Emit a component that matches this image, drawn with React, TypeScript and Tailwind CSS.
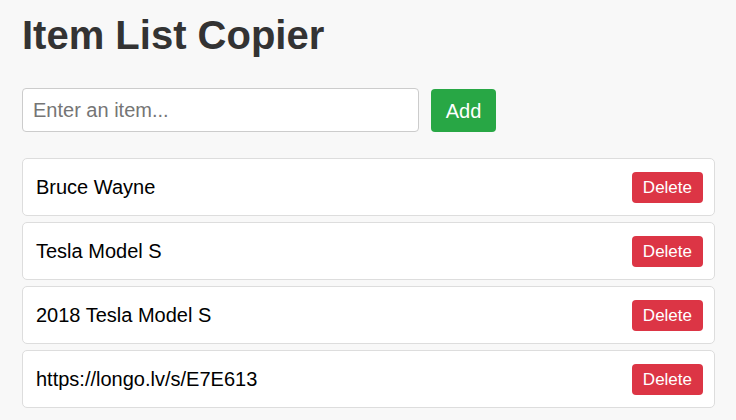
import React, { useState } from 'react';

const initialItems = ['Bruce Wayne', 'Tesla Model S', '2018 Tesla Model S', 'https://longo.lv/s/E7E613'];

export default function App() {
  const [items, setItems] = useState<string[]>(initialItems);
  const [text, setText] = useState('');

  const addItem = () => {
    const value = text.trim();
    if (!value) return;
    setItems([...items, value]);
    setText('');
  };

  const removeItem = (index: number) => {
    setItems(items.filter((_, i) => i !== index));
  };

  return (
    <div className="min-h-screen bg-[#f8f8f8] pl-[22px] pr-[21px] pt-[12px] pb-6 font-['Liberation_Sans',Arial,sans-serif]">
      <h1 className="text-[40px] leading-[46px] font-bold text-[#333]">Item List Copier</h1>

      <div className="mt-[30px] flex items-start gap-[12px]">
        <input
          type="text"
          value={text}
          onChange={(e) => setText(e.target.value)}
          onKeyDown={(e) => e.key === 'Enter' && addItem()}
          placeholder="Enter an item..."
          className="w-[397px] h-[44px] px-[10px] text-[20px] bg-white border border-[#ccc] rounded-[4px] text-black placeholder:text-[#757575] outline-none"
        />
        <button
          onClick={addItem}
          className="mt-px h-[43px] w-[65px] text-[20px] text-white bg-[#28a745] rounded-[4px]"
        >
          Add
        </button>
      </div>

      <ul className="mt-[26px] flex flex-col gap-[6px]">
        {items.map((item, i) => (
          <li
            key={i}
            className="h-[58px] flex items-center justify-between pl-[13px] pr-[11px] bg-white border border-[#ddd] rounded-[5px]"
          >
            <span className="text-[20px] text-black">{item}</span>
            <button
              onClick={() => removeItem(i)}
              className="h-[31px] px-[11px] text-[17px] leading-[19px] text-white bg-[#dc3545] rounded-[4px]"
            >
              Delete
            </button>
          </li>
        ))}
      </ul>
    </div>
  );
}
